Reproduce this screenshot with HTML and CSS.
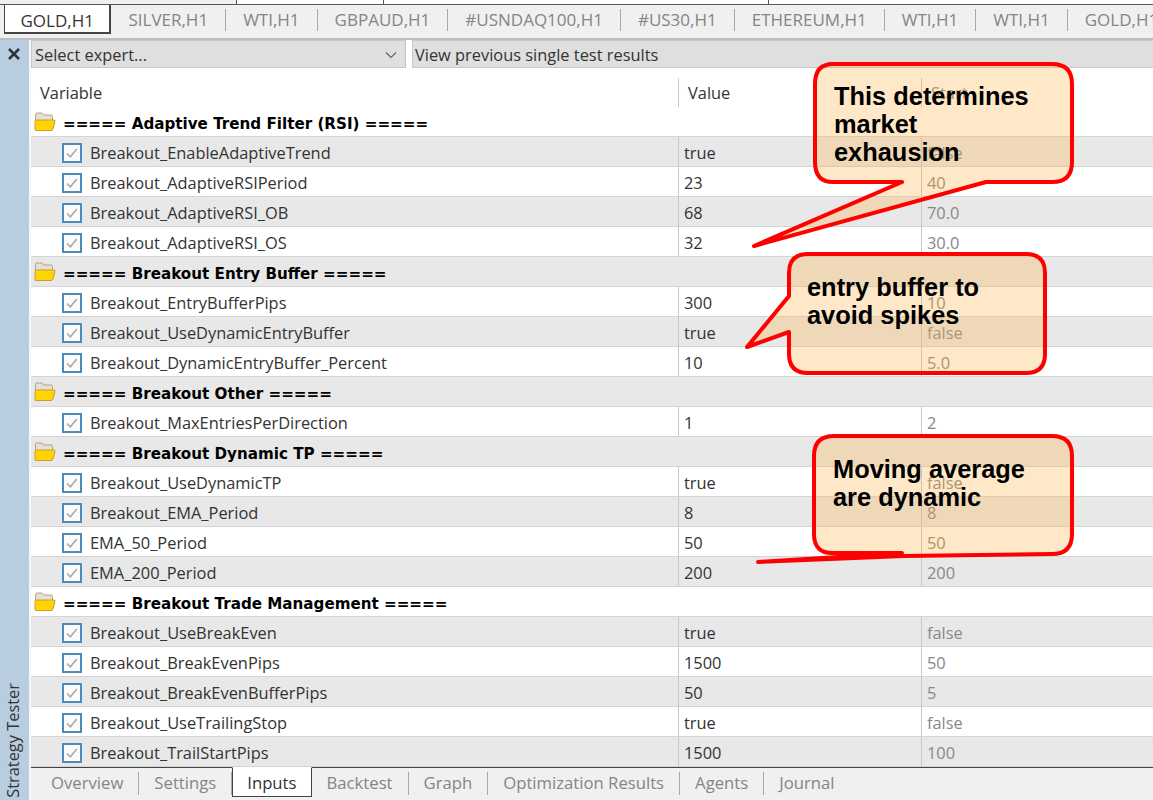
FILE: index.html
```html
<!DOCTYPE html>
<html lang="en">
<head>
    <meta charset="UTF-8">
    <meta name="viewport" content="width=device-width, initial-scale=1.0">
    <title>Strategy Tester - Inputs</title>
    <link rel="stylesheet" href="styles.css">
</head>
<body>
    <svg class="defs" width="0" height="0">
        <symbol id="folder" viewBox="0 0 22 20">
            <path d="M1.5 9V2.5Q1.5 1 3 1H8L10 3H17Q18.5 3 18.5 4.5V8" fill="#e4e0d8" stroke="#b5a27c"/>
            <path d="M1 17.5L1 9.5Q1 8 2.5 8H20Q21.5 8 21 9.5L19 17Q18.6 18.5 17 18.5H2Q1 18.5 1 17.5Z" fill="#ffd400" stroke="#cc9a30"/>
        </symbol>
        <symbol id="check" viewBox="0 0 20 20">
            <rect x="1" y="1" width="18" height="18" fill="#fbfbfb" stroke="#4a8cc0" stroke-width="2"/>
            <path d="M5 10.5L8.4 13.8L14.8 6" fill="none" stroke="#a8a8a8" stroke-width="1.5"/>
        </symbol>
    </svg>

    <div class="top-edge">
        <div class="edge-box edge-a"></div>
        <div class="edge-box edge-b"></div>
        <div class="edge-box edge-c"></div>
    </div>

    <div class="chart-tabs">
        <div class="chart-tab active">GOLD,H1</div>
        <div class="chart-tab">SILVER,H1</div>
        <div class="chart-tab">WTI,H1</div>
        <div class="chart-tab">GBPAUD,H1</div>
        <div class="chart-tab">#USNDAQ100,H1</div>
        <div class="chart-tab">#US30,H1</div>
        <div class="chart-tab">ETHEREUM,H1</div>
        <div class="chart-tab">WTI,H1</div>
        <div class="chart-tab">WTI,H1</div>
        <div class="chart-tab">GOLD,H1</div>
    </div>

    <div class="tester">
        <div class="sidebar">
            <svg class="close" width="14" height="14" viewBox="0 0 14 14"><path d="M2 2L12 12M12 2L2 12" fill="none" stroke="#333" stroke-width="2.6"/></svg>
            <div class="side-title">Strategy Tester</div>
        </div>

        <div class="panel">
            <div class="toolbar">
                <div class="select-box">
                    <span>Select expert...</span>
                    <svg class="chevron" width="12" height="8" viewBox="0 0 12 8"><path d="M1 1.5L6 6.5L11 1.5" fill="none" stroke="#666" stroke-width="1.2"/></svg>
                </div>
                <div class="view-box">View previous single test results</div>
            </div>

            <div class="table-head">
                <div class="col-var">Variable</div>
                <div class="col-val">Value</div>
                <div class="col-start">Start</div>
            </div>

            <div class="rows" id="rows"></div>

            <div class="bottom-tabs">
                <div class="bottom-tab first">Overview</div>
                <div class="bottom-tab">Settings</div>
                <div class="bottom-tab active">Inputs</div>
                <div class="bottom-tab">Backtest</div>
                <div class="bottom-tab">Graph</div>
                <div class="bottom-tab">Optimization Results</div>
                <div class="bottom-tab">Agents</div>
                <div class="bottom-tab last">Journal</div>
            </div>
        </div>
    </div>

    <!-- callouts drawn over the table -->
    <svg class="callouts" width="1153" height="800" viewBox="0 0 1153 800">
        <path class="bubble" d="M833 64H1052Q1072 64 1072 84V162Q1072 182 1052 182H986L754 246L902 182H833Q815 182 815 162V84Q815 64 833 64Z"/>
        <path class="bubble" d="M808 254H1026Q1045 254 1045 273V354Q1045 373 1026 373H808Q789 373 789 354V332L747 347L789 296V273Q789 254 808 254Z"/>
        <path class="bubble" d="M834 436H1052Q1072 436 1072 456V534Q1072 554 1052 554L904 556L758 562L902 553H834Q814 554 814 534V456Q814 436 834 436Z"/>
    </svg>
    <div class="note note-a">This determines market exhausion</div>
    <div class="note note-b">entry buffer to avoid spikes</div>
    <div class="note note-c">Moving average are dynamic</div>

    <script>
        const data = [
            ['Adaptive Trend Filter (RSI)'],
            ['Breakout_EnableAdaptiveTrend', 'true', 'false'],
            ['Breakout_AdaptiveRSIPeriod', '23', '40'],
            ['Breakout_AdaptiveRSI_OB', '68', '70.0'],
            ['Breakout_AdaptiveRSI_OS', '32', '30.0'],
            ['Breakout Entry Buffer'],
            ['Breakout_EntryBufferPips', '300', '10'],
            ['Breakout_UseDynamicEntryBuffer', 'true', 'false'],
            ['Breakout_DynamicEntryBuffer_Percent', '10', '5.0'],
            ['Breakout Other'],
            ['Breakout_MaxEntriesPerDirection', '1', '2'],
            ['Breakout Dynamic TP'],
            ['Breakout_UseDynamicTP', 'true', 'false'],
            ['Breakout_EMA_Period', '8', '8'],
            ['EMA_50_Period', '50', '50'],
            ['EMA_200_Period', '200', '200'],
            ['Breakout Trade Management'],
            ['Breakout_UseBreakEven', 'true', 'false'],
            ['Breakout_BreakEvenPips', '1500', '50'],
            ['Breakout_BreakEvenBufferPips', '50', '5'],
            ['Breakout_UseTrailingStop', 'true', 'false'],
            ['Breakout_TrailStartPips', '1500', '100']
        ];

        // every other row is shaded, group rows included
        let html = '';
        data.forEach(function(r, i) {
            const shade = i % 2 === 1 ? ' shade' : '';
            if (r.length === 1) {
                html += '<div class="row group' + shade + '"><svg class="folder"><use href="#folder"/></svg><b>===== ' + r[0] + ' =====</b></div>';
            } else {
                html += '<div class="row' + shade + '"><div class="cell-var"><svg class="check"><use href="#check"/></svg>' + r[0] + '</div>' +
                    '<div class="cell-val">' + r[1] + '</div><div class="cell-start">' + r[2] + '</div></div>';
            }
        });
        document.getElementById('rows').innerHTML = html;
    </script>
</body>
</html>
```

FILE: styles.css
```css
html, body {
    margin: 0;
    height: 800px;
    overflow: hidden;
}
body {
    font-family: 'Open Sans', 'Noto Sans', sans-serif;
    font-size: 16.4px;
    color: #333;
    background-color: #f0f0f0;
    position: relative;
}
.defs {
    display: block;
    height: 0;
}
.top-edge {
    height: 5px;
    display: flex;
    background-color: #fff;
    border-bottom: 1px solid #555;
    box-sizing: border-box;
}
.edge-box {
    border-right: 1px solid #555;
}
.edge-a { width: 236px; background-color: #f0f0f0; }
.edge-b { width: 146px; }
.edge-c { width: 384px; }
.chart-tabs {
    height: 35px;
    display: flex;
    align-items: flex-start;
    background-color: #f0f0f0;
    border-bottom: 2px solid #bdbdbd;
    box-sizing: border-box;
    overflow: hidden;
    padding-left: 4px;
    font-size: 17px;
}
.chart-tab {
    height: 22px;
    line-height: 22px;
    margin-top: 4px;
    padding: 0 17px;
    color: #858585;
    border-right: 1px solid #a8a8a8;
    white-space: nowrap;
    flex-shrink: 0;
}
.chart-tab.active {
    height: 29px;
    line-height: 31px;
    margin-top: 0;
    padding: 0 15.5px;
    box-sizing: border-box;
    color: #333;
    background-color: #fff;
    border: 1px solid #444;
    border-top: 0;
    border-bottom-width: 2px;
    border-right-width: 2px;
}
.tester {
    height: 760px;
    display: flex;
}
.sidebar {
    width: 29px;
    flex-shrink: 0;
    background-color: #b9cde0;
    display: flex;
    flex-direction: column;
    justify-content: space-between;
    align-items: center;
}
.close {
    margin: 7px 2px 0 0;
}
.side-title {
    writing-mode: vertical-rl;
    transform: rotate(180deg);
    padding-top: 2px;
    padding-left: 4px;
    white-space: nowrap;
    line-height: 24px;
}
.panel {
    flex: 1;
    min-width: 0;
    background-color: #fff;
    display: flex;
    flex-direction: column;
    border-left: 2px solid #f4f6f8;
}
.toolbar {
    height: 28px;
    display: flex;
    gap: 6px;
    flex-shrink: 0;
}
.select-box {
    width: 375px;
    display: flex;
    justify-content: space-between;
    align-items: center;
    padding: 1px 6px 0 3px;
    box-sizing: border-box;
    background-color: #dfdfdf;
    border: 1px solid #c8c8c8;
    border-right-color: #c0c0c0;
}
.chevron {
    margin-right: 2px;
}
.view-box {
    flex: 1;
    line-height: 28px;
    padding-left: 2px;
    background-color: #dfdfdf;
    border: 1px solid #c8c8c8;
    border-right: 0;
    box-sizing: border-box;
}
.table-head {
    height: 39px;
    display: flex;
    align-items: center;
    flex-shrink: 0;
    padding-top: 10px;
    box-sizing: border-box;
}
.col-var {
    width: 647px;
    padding-left: 9px;
    box-sizing: border-box;
}
.col-val {
    width: 243px;
    padding-left: 9px;
    box-sizing: border-box;
    border-left: 1px solid #c8c8c8;
    line-height: 29px;
}
.col-start {
    padding-left: 9px;
    border-left: 1px solid #c8c8c8;
    line-height: 29px;
    color: #888;
}
.rows {
    flex: 1;
    min-height: 0;
    overflow: hidden;
}
.row {
    height: 30px;
    display: flex;
    align-items: center;
    box-sizing: border-box;
    border-bottom: 1px solid #d4d4d4;
}
.row.shade {
    background-color: #e8e8e8;
}
.row.group {
    color: #000;
    padding-top: 4px;
}
.folder {
    width: 22px;
    height: 20px;
    margin: -4px 7px 0 3px;
}
.group b {
    font-family: 'DejaVu Sans', sans-serif;
    font-weight: 700;
    font-size: 15.15px;
}
.check {
    width: 20px;
    height: 20px;
    margin-right: 8px;
}
.cell-var {
    width: 647px;
    padding-left: 31px;
    padding-top: 2px;
    box-sizing: border-box;
    display: flex;
    align-items: center;
    height: 100%;
}
.cell-val {
    width: 243px;
    height: 100%;
    line-height: 32px;
    padding-left: 5px;
    box-sizing: border-box;
    border-left: 1px solid #c8c8c8;
}
.cell-start {
    height: 100%;
    line-height: 32px;
    padding-left: 5px;
    border-left: 1px solid #c8c8c8;
    color: #888;
    flex: 1;
}
.bottom-tabs {
    height: 33px;
    flex-shrink: 0;
    display: flex;
    align-items: flex-start;
    background-color: #f0f0f0;
    border-top: 1px solid #444;
    box-sizing: border-box;
    font-size: 16.7px;
}
.bottom-tab {
    height: 23px;
    line-height: 22px;
    margin-top: 4px;
    padding: 0 15px;
    color: #858585;
    border-right: 1px solid #a8a8a8;
    white-space: nowrap;
}
.bottom-tab.first {
    padding-left: 20px;
}
.bottom-tab.last {
    border-right: 0;
}
.bottom-tab.active {
    height: 30px;
    line-height: 29px;
    margin-top: -1px;
    padding: 0 14px;
    color: #333;
    background-color: #fff;
    border: 1px solid #444;
    border-top-color: #fff;
    box-sizing: border-box;
}
.callouts {
    position: absolute;
    left: 0;
    top: 0;
    pointer-events: none;
}
.bubble {
    fill: #fbb248;
    fill-opacity: 0.3;
    stroke: #ff0000;
    stroke-width: 4;
    stroke-linejoin: round;
}
.note {
    position: absolute;
    font-family: 'Liberation Sans', Arial, sans-serif;
    font-weight: bold;
    font-size: 25.4px;
    line-height: 28px;
    color: #000;
}
.note-a { left: 834px; top: 82px; width: 200px; }
.note-b { left: 807px; top: 273px; width: 220px; }
.note-c { left: 833px; top: 455px; width: 220px; }
```
